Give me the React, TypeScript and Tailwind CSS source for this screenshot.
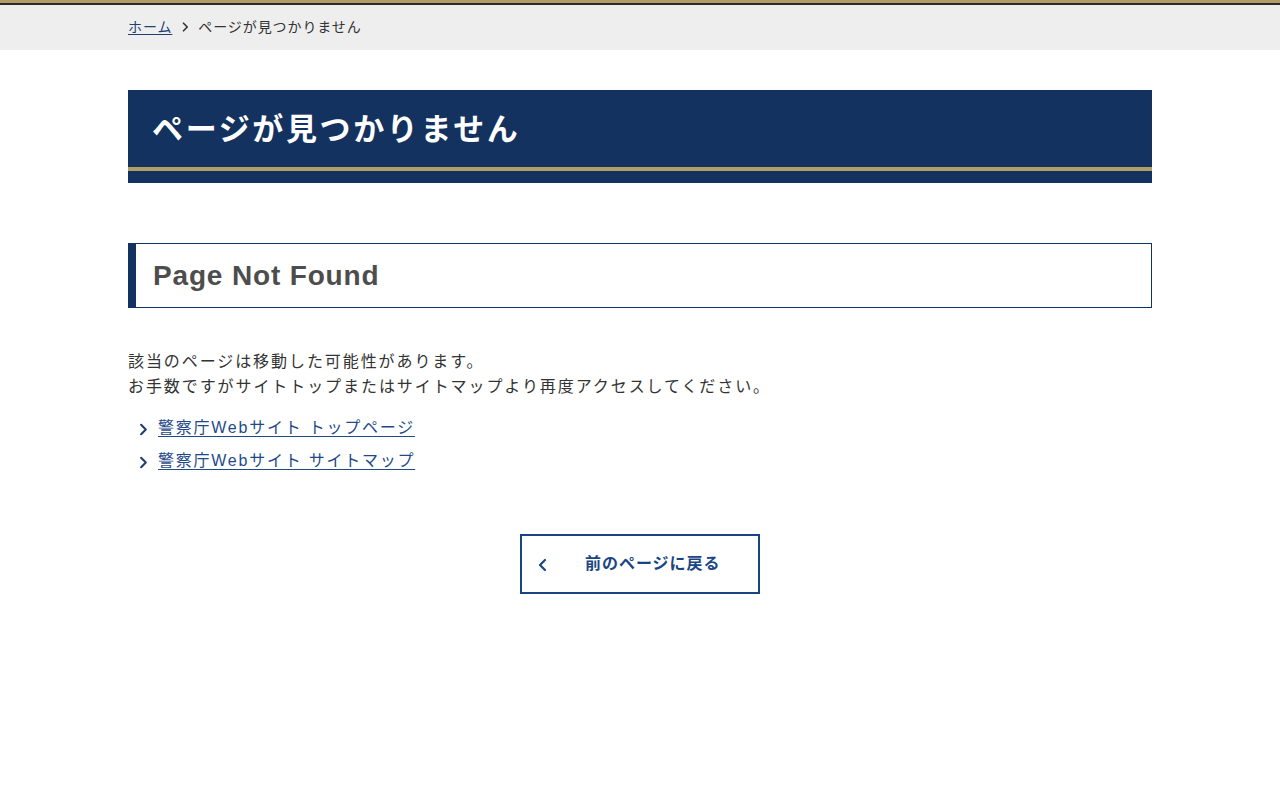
import React from 'react';

const Chevron = ({ dir = 'right', className = '' }: { dir?: 'right' | 'left'; className?: string }) => (
  <svg viewBox="0 0 10 16" className={className} fill="none" stroke="currentColor" strokeWidth={2.2} strokeLinecap="round" strokeLinejoin="round">
    {dir === 'right' ? <path d="M3 3l5 5-5 5" /> : <path d="M7 3L2 8l5 5" />}
  </svg>
);

const links = ['警察庁Webサイト トップページ', '警察庁Webサイト サイトマップ'];

const App: React.FC = () => {
  return (
    <div className="min-h-[800px] bg-white text-[#333] [font-family:'Liberation_Sans','Noto_Sans_CJK_JP',sans-serif]">
      <div className="h-[3px] bg-[#b09e66]" />
      <div className="h-[2px] bg-[#2b2b2b]" />

      <nav className="bg-[#eeeeee] h-[45px]">
        <div className="mx-auto w-[1024px] flex items-center h-full pb-[1px] text-[14px] tracking-[0.065em]">
          <a href="#" className="text-[#1f3f73] underline underline-offset-2">ホーム</a>
          <Chevron className="w-[8px] h-[12px] mx-[9px] text-[#333]" />
          <span className="text-[#333]">ページが見つかりません</span>
        </div>
      </nav>

      <main className="mx-auto w-[1024px] pt-[40px]">
        <div className="bg-[#13325f] pt-[18px]">
          <h1 className="text-white text-[31px] font-bold leading-[42px] px-[24px] tracking-[0.085em] pt-[1px]">ページが見つかりません</h1>
          <div className="mt-[16px] h-[4px] bg-[#b09e66]" />
          <div className="h-[12px]" />
        </div>

        <div className="mt-[60px] border border-[#13325f] border-l-[8px] h-[65px] flex items-center pl-[17px]">
          <h2 className="text-[28px] font-bold text-[#4d4d4d] tracking-[0.03em] pt-[1px]">Page Not Found</h2>
        </div>

        <div className="mt-[41px] text-[16px] leading-[25px] tracking-[0.12em] text-[#333]">
          <p>該当のページは移動した可能性があります。</p>
          <p>お手数ですがサイトトップまたはサイトマップより再度アクセスしてください。</p>
        </div>

        <ul className="mt-[17px] flex flex-col gap-[9px]">
          {links.map(l => (
            <li key={l} className="flex items-center h-[24px] pl-[10px]">
              <Chevron className="w-[10px] h-[15px] text-[#1f3f73] mr-[10px] mt-[3px]" />
              <a href="#" className="text-[16px] text-[#1f4a8a] underline underline-offset-[3px] tracking-[0.11em]">{l}</a>
            </li>
          ))}
        </ul>

        <div className="mt-[61px] flex justify-center">
          <button className="w-[240px] h-[60px] border-2 border-[#1a4583] flex items-center text-[#1a4583] font-bold text-[16px] tracking-[0.06em] pl-[16px]">
            <Chevron dir="left" className="w-[10px] h-[16px] mt-[1px]" />
            <span className="ml-[37px]">前のページに戻る</span>
          </button>
        </div>
      </main>
    </div>
  );
};

export default App;
